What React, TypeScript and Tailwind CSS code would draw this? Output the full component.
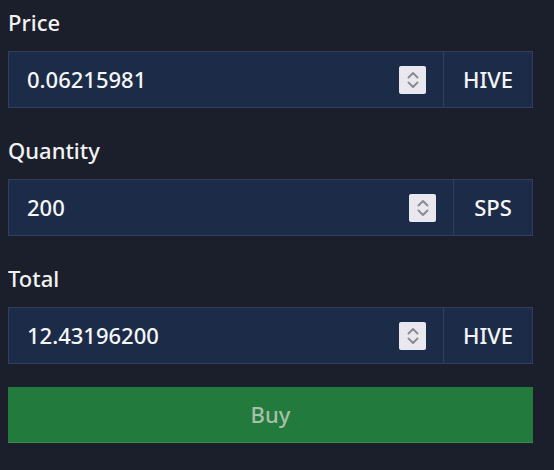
import React from "react";

function Spinner() {
  return (
    <div className="w-[27px] h-[28px] bg-[#e8e8ee] rounded-[2px] flex items-center justify-center">
      <svg width="16" height="24" viewBox="0 0 16 24" fill="none" stroke="#8c8c92" strokeWidth="2" strokeLinecap="round" strokeLinejoin="round">
        <path d="M3.5 9.5 L8 5 L12.5 9.5" />
        <path d="M3.5 14.5 L8 19 L12.5 14.5" />
      </svg>
    </div>
  );
}

function Field({ label, value, unit, unitW, first }: { label: string; value: string; unit: string; unitW: string; first?: boolean }) {
  return (
    <div className={first ? "" : "mt-[26px]"}>
      <div className="h-[36px] leading-[32px] mb-[9px] text-[22px] font-medium text-[#f2f2f2]">{label}</div>
      <div className="h-[57px] flex border border-[#2f3f5c] bg-[#1c2c48]">
        <div className="flex-1 flex items-center pl-[18px] pr-[17px] border-r border-[#2f3f5c]">
          <span className="flex-1 text-[22px] font-medium text-[#f6f6f6]">{value}</span>
          <Spinner />
        </div>
        <div className={`${unitW} flex items-center justify-center text-[22px] font-medium text-[#f6f6f6]`}>{unit}</div>
      </div>
    </div>
  );
}

export default function App() {
  return (
    <div className="w-[554px] h-[470px] bg-[#1b1f2b] pl-[8px] pr-[21px] pt-[6px]" style={{ fontFamily: '"Noto Sans", sans-serif' }}>
      <Field first label="Price" value="0.06215981" unit="HIVE" unitW="w-[88px]" />
      <Field label="Quantity" value="200" unit="SPS" unitW="w-[78px]" />
      <Field label="Total" value="12.43196200" unit="HIVE" unitW="w-[88px]" />
      <button className="mt-[23px] w-full h-[56px] bg-[#237a3d] border-b border-[#3a8a4e] text-[22px] font-medium text-[#a6c0aa]">Buy</button>
    </div>
  );
}
